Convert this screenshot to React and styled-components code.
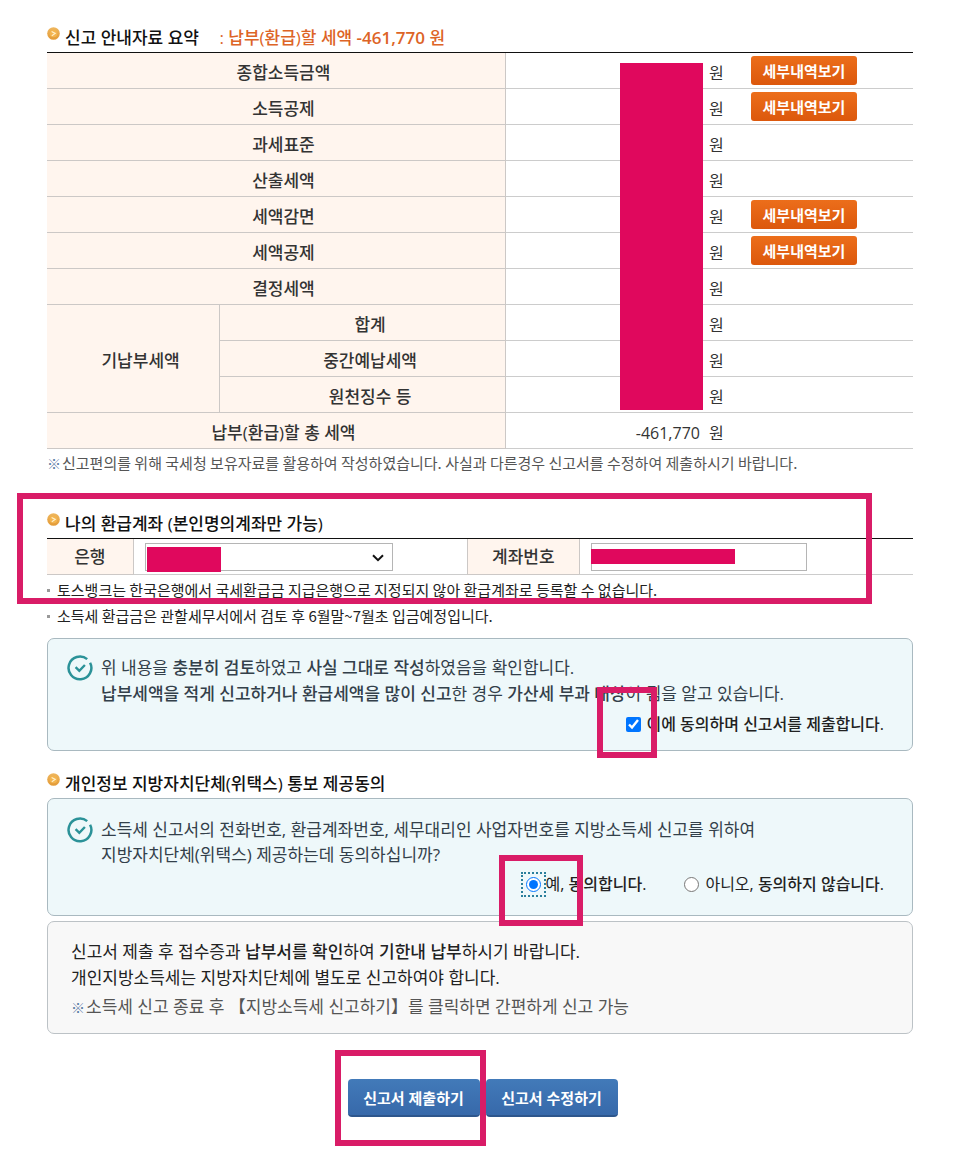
import React, { useState } from "react";
import styled, { createGlobalStyle } from "styled-components";

const GlobalStyle = createGlobalStyle`
    * { box-sizing: border-box; }
    body {
        margin: 0;
        background: #fff;
        color: #333;
        font-family: "Open Sans", "Noto Sans CJK KR", sans-serif;
        font-size: 17px;
    }
    button, input, select { font-family: inherit; }
`

const summaryRows = [
    { label: "종합소득금액", detail: true },
    { label: "소득공제", detail: true },
    { label: "과세표준" },
    { label: "산출세액" },
    { label: "세액감면", detail: true },
    { label: "세액공제", detail: true },
    { label: "결정세액" },
    { group: "기납부세액", label: "합계", sub: true },
    { label: "중간예납세액", sub: true },
    { label: "원천징수 등", sub: true },
    { label: "납부(환급)할 총 세액", amount: "-461,770" },
]

function Title({ children }) {

    return <Heading>
        <Bullet viewBox="0 0 13 13" aria-hidden="true">
            <defs>
                <linearGradient id="bullet" x1="0" y1="0" x2="0" y2="1">
                    <stop offset="0" stopColor="#efb75f"/>
                    <stop offset="1" stopColor="#e39a35"/>
                </linearGradient>
            </defs>
            <circle cx="6.5" cy="6.5" r="6.3" fill="url(#bullet)"/>
            <circle cx="6.5" cy="6.5" r="3.8" fill="#f3b44e"/>
            <path d="M4.6 4.4l3.6 2-3.4 2.4" fill="none" stroke="#fff0cc" strokeWidth="1.2"/>
        </Bullet>
        {children}
    </Heading>
}

function CheckMark() {

    return <CheckIcon viewBox="0 0 26 26" aria-hidden="true">
        <path d="M20.2 4.1A11.4 11.4 0 1 0 23.1 7.7" fill="none" stroke="#2b9298" strokeWidth="2.5"/>
        <path d="M8.6 12.2l3.7 3.6 5.6-5.8" fill="none" stroke="#2b9298" strokeWidth="2.4"/>
    </CheckIcon>
}

function SummaryTable() {

    return <Table>
        <colgroup>
            <col style={{ width: "20%" }}/>
            <col style={{ width: "33%" }}/>
            <col/>
        </colgroup>
        <tbody>
            {summaryRows.map((row, index) => <tr key={row.label}>
                {row.group && <SummaryHead scope="rowgroup" rowSpan={3}>{row.group}</SummaryHead>}
                <SummaryHead scope="row" colSpan={row.sub ? 1 : 2}>{row.label}</SummaryHead>
                <Cell>
                    <AmountLine>
                        <Amount>
                            {row.amount}
                            {index === 0 && <AmountMask/>}
                        </Amount>
                        <Unit>원</Unit>
                        {row.detail && <DetailButton type="button">세부내역보기</DetailButton>}
                    </AmountLine>
                </Cell>
            </tr>)}
        </tbody>
    </Table>
}

function AccountTable() {

    return <Table>
        <colgroup>
            <col style={{ width: "10%" }}/>
            <col/>
            <col style={{ width: "13%" }}/>
            <col style={{ width: "38.5%" }}/>
        </colgroup>
        <tbody>
            <tr>
                <HeadCell scope="row"><label htmlFor="bank">은행</label></HeadCell>
                <FieldCell>
                    <SelectField>
                        <BankSelect id="bank"/>
                        <Chevron viewBox="0 0 12 8" aria-hidden="true">
                            <path d="M1 1.2l5 5 5-5" fill="none" stroke="#111" strokeWidth="2"/>
                        </Chevron>
                        <BankMask/>
                    </SelectField>
                </FieldCell>
                <HeadCell scope="row" $start><label htmlFor="account">계좌번호</label></HeadCell>
                <FieldCell>
                    <AccountField>
                        <AccountInput id="account" type="text"/>
                        <AccountMask/>
                    </AccountField>
                </FieldCell>
            </tr>
        </tbody>
    </Table>
}

function App() {

    const [agree, setAgree] = useState(true)
    const [share, setShare] = useState("yes")

    return <Page>
        <GlobalStyle/>

        <Title>신고 안내자료 요약 <Result>: 납부(환급)할 세액 <b>-461,770</b> 원</Result></Title>
        <SummaryTable/>
        <Note><Mark>※</Mark>신고편의를 위해 국세청 보유자료를 활용하여 작성하였습니다. 사실과 다른경우 신고서를 수정하여 제출하시기 바랍니다.</Note>

        <AccountSection>
            <Title>나의 환급계좌 (본인명의계좌만 가능)</Title>
            <AccountTable/>
            <Hints>
                <li>토스뱅크는 한국은행에서 국세환급금 지급은행으로 지정되지 않아 환급계좌로 등록할 수 없습니다.</li>
                <li>소득세 환급금은 관할세무서에서 검토 후 6월말~7월초 입금예정입니다.</li>
            </Hints>
            <AccountFrame/>
        </AccountSection>

        <Panel>
            <PanelText>
                <CheckMark/>
                <p>
                    위 내용을 <b>충분히 검토</b>하였고 <b>사실 그대로 작성</b>하였음을 확인합니다.<br/>
                    <b>납부세액을 적게 신고하거나 환급세액을 많이 신고</b>한 경우 <b>가산세 부과 대상</b>이 됨을 알고 있습니다.
                </p>
            </PanelText>
            <Choices>
                <Choice>
                    <Control>
                        <CheckInput type="checkbox" checked={agree} onChange={e => setAgree(e.target.checked)}/>
                        <AgreeFrame/>
                    </Control>
                    <b>이에 동의하며 신고서를 제출합니다.</b>
                </Choice>
            </Choices>
        </Panel>

        <ConsentSection>
            <Title>개인정보 지방자치단체(위택스) 통보 제공동의</Title>
            <Panel $tall>
                <PanelText $tall>
                    <CheckMark/>
                    <p>
                        소득세 신고서의 전화번호, 환급계좌번호, 세무대리인 사업자번호를 지방소득세 신고를 위하여<br/>
                        지방자치단체(위택스) 제공하는데 동의하십니까?
                    </p>
                </PanelText>
                <Choices>
                    <Choice $tight>
                        <Control $focus>
                            <CheckInput type="radio" name="share" checked={share === "yes"} onChange={() => setShare("yes")}/>
                            <RadioFrame/>
                        </Control>
                        <span>예, <b>동의합니다.</b></span>
                    </Choice>
                    <Choice>
                        <Control>
                            <CheckInput type="radio" name="share" checked={share === "no"} onChange={() => setShare("no")}/>
                        </Control>
                        <span>아니오, <b>동의하지 않습니다.</b></span>
                    </Choice>
                </Choices>
            </Panel>
        </ConsentSection>

        <InfoPanel>
            <p>신고서 제출 후 접수증과 <b>납부서를 확인</b>하여 <b>기한내 납부</b>하시기 바랍니다.</p>
            <p>개인지방소득세는 지방자치단체에 별도로 신고하여야 합니다.</p>
            <InfoNote><Mark>※</Mark>소득세 신고 종료 후 【지방소득세 신고하기】를 클릭하면 간편하게 신고 가능</InfoNote>
        </InfoPanel>

        <Actions>
            <ActionSlot>
                <ActionButton type="button">신고서 제출하기</ActionButton>
                <SubmitFrame/>
            </ActionSlot>
            <ActionButton type="button">신고서 수정하기</ActionButton>
        </Actions>
    </Page>
}

const Page = styled.main`
    padding: 24px 45px 54px 47px;
`

const Heading = styled.h2`
    display: flex;
    margin: 0;
    color: #111;
    font-size: 17px;
    font-weight: 500;
    line-height: 28px;
    white-space: pre;
`

const Bullet = styled.svg`
    flex: none;
    width: 13px;
    height: 13px;
    margin: 3px 5px 0 0;
`

const Result = styled.span`
    margin-left: 16px;
    color: #dd6426;

    b { font-weight: 600; }
`

const Table = styled.table`
    width: 100%;
    border-collapse: separate;
    border-spacing: 0;
    border-top: 1px solid #111;
    table-layout: fixed;
`

const HeadCell = styled.th`
    height: 36px;
    padding: 0;
    border-bottom: 1px solid #ccc8c6;
    border-right: 1px solid #ccc8c6;
    border-left: ${props => props.$start ? "1px solid #ccc8c6" : "0"};
    background: #fff5ee;
    color: #333;
    font-size: 17px;
    font-weight: 500;
    line-height: 24px;
`

const SummaryHead = styled(HeadCell)`
    padding: 4px 0 0 15px;
`

const Cell = styled.td`
    height: 36px;
    padding: 0;
    border-bottom: 1px solid #ccc;
`

const FieldCell = styled(Cell)`
    padding: 0 0 0 11px;
`

const AmountLine = styled.div`
    display: flex;
    align-items: center;
    height: 35px;
    line-height: 24px;
`

const Amount = styled.span`
    position: relative;
    width: 194px;
    height: 24px;
    font-size: 16px;
    line-height: 28px;
    text-align: right;
`

const Unit = styled.span`
    width: 42px;
    margin-left: 9px;
    padding-top: 4px;
    font-size: 16px;
`

const Mask = styled.span`
    position: absolute;
    background: #e0085d;
`

const AmountMask = styled(Mask)`
    top: 4px;
    right: -3px;
    width: 83px;
    height: 347px;
`

const BankMask = styled(Mask)`
    top: 4px;
    left: 2px;
    width: 74px;
    height: 25px;
`

const AccountMask = styled(Mask)`
    top: 6px;
    left: 0;
    width: 144px;
    height: 15px;
`

const DetailButton = styled.button`
    width: 106px;
    height: 29px;
    padding: 0;
    border: 0;
    border-radius: 3px;
    background: linear-gradient(#ec6e1b, #dc580c);
    color: #fff;
    font-size: 15px;
    font-weight: 700;
    line-height: 24px;
`

const SelectField = styled.div`
    position: relative;
    width: 248px;
    height: 28px;
`

const AccountField = styled(SelectField)`
    width: 216px;
`

const BankSelect = styled.select`
    display: block;
    width: 100%;
    height: 28px;
    border: 1px solid #b5b5b5;
    border-radius: 0;
    background: #fff;
    appearance: none;
`

const AccountInput = styled.input`
    display: block;
    width: 100%;
    height: 28px;
    border: 1px solid #b5b5b5;
`

const Chevron = styled.svg`
    position: absolute;
    top: 11px;
    right: 9px;
    width: 12px;
    height: 8px;
    pointer-events: none;
`

const Note = styled.p`
    margin: 0;
    color: #555;
    font-family: "Noto Sans CJK KR", sans-serif;
    font-size: 15px;
    line-height: 28px;
`

const Mark = styled.span`
    margin-right: 1px;
    color: #5b7ba5;
    font-size: 14px;
    line-height: 1;
`

const AccountSection = styled.section`
    position: relative;
    margin-top: 33px;
`

const Hints = styled.ul`
    margin: 2px 0 0;
    padding: 0;
    color: #222;
    font-family: "Noto Sans CJK KR", sans-serif;
    font-size: 15px;
    line-height: 26px;
    list-style: none;

    li {
        display: flex;
        align-items: center;
    }

    li::before {
        content: "";
        width: 3px;
        height: 3px;
        margin-right: 7px;
        background: #999;
    }
`

const Frame = styled.span`
    position: absolute;
    border: 6px solid #d91c67;
    pointer-events: none;
`

const AccountFrame = styled(Frame)`
    top: -17px;
    right: 41px;
    bottom: 25px;
    left: -30px;
`

const AgreeFrame = styled(Frame)`
    top: -30px;
    left: -29px;
    width: 60px;
    height: 71px;
`

const RadioFrame = styled(Frame)`
    top: -19px;
    left: -24px;
    width: 84px;
    height: 71px;
`

const SubmitFrame = styled(Frame)`
    top: -29px;
    right: -6px;
    bottom: -29px;
    left: -13px;
`

const Panel = styled.section`
    margin-top: ${props => props.$tall ? "0" : "9px"};
    padding: ${props => props.$tall ? "18px 28px 18px 19px" : "16px 28px 13px 19px"};
    border: 1px solid #a9b9c0;
    border-radius: 7px;
    background: #eef8fa;
    color: #33404a;

    b { font-weight: 500; }
`

const PanelText = styled.div`
    display: flex;
    gap: 8px;
    line-height: ${props => props.$tall ? "25px" : "26px"};

    p { margin: 0; }
`

const CheckIcon = styled.svg`
    flex: none;
    width: 26px;
    height: 26px;
`

const Choices = styled.div`
    display: flex;
    justify-content: flex-end;
    gap: 38px;
    margin-top: 4px;
    color: #222;
    font-size: 16px;
    line-height: 26px;
`

const Choice = styled.label`
    display: flex;
    align-items: center;
    gap: ${props => props.$tight ? "2px" : "6px"};
`

const Control = styled.span`
    position: relative;
    display: flex;
    padding: ${props => props.$focus ? "3px" : "0"};
    outline: ${props => props.$focus ? "2px dotted #2a7f9c" : "0"};
`

const CheckInput = styled.input`
    width: 15px;
    height: 15px;
    margin: 0;
`

const ConsentSection = styled.section`
    margin-top: 19px;
`

const InfoPanel = styled.section`
    margin-top: 5px;
    padding: 17px 23px 13px;
    border: 1px solid #bcc2c6;
    border-radius: 7px;
    background: #f8f8f8;
    color: #222;
    line-height: 26px;

    p { margin: 0; }
    b { font-weight: 500; }
`

const InfoNote = styled.div`
    margin-top: 3px;
    color: #555;
`

const Actions = styled.div`
    display: flex;
    justify-content: center;
    gap: 6px;
    margin-top: 45px;
    padding-left: 5px;
`

const ActionSlot = styled.div`
    position: relative;
`

const ActionButton = styled.button`
    width: 132px;
    height: 38px;
    padding: 0;
    border: 0;
    border-bottom: 2px solid #2d568c;
    border-radius: 4px;
    background: linear-gradient(#427ab9, #3769aa);
    color: #fff;
    font-size: 15px;
    font-weight: 700;
`

export default App
